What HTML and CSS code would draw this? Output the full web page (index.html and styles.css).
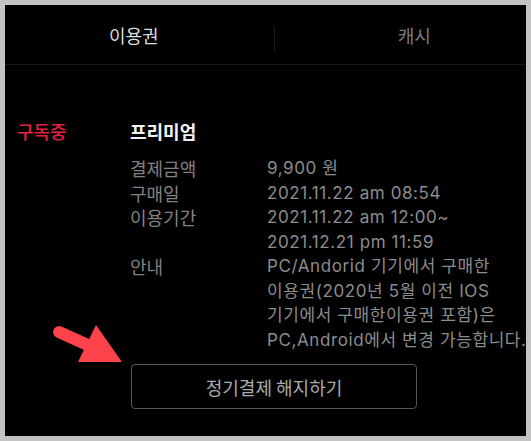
FILE: index.html
```html
<!DOCTYPE html>
<html>

<head>
    <title>이용권</title>
    <link rel="stylesheet" href="styles.css">
</head>

<body>
    <div class="frame">
        <div class="screen">
            <nav class="tabs">
                <div class="tab active">이용권</div>
                <span class="tab-divider"></span>
                <div class="tab">캐시</div>
            </nav>

            <section class="pass">
                <div class="status">구독중</div>
                <div class="info">
                    <h2 class="plan">프리미엄</h2>
                    <dl class="details">
                        <dt>결제금액</dt>
                        <dd>9,900 원</dd>
                        <dt>구매일</dt>
                        <dd>2021.11.22 am 08:54</dd>
                        <dt>이용기간</dt>
                        <dd>2021.11.22 am 12:00~<br>2021.12.21 pm 11:59</dd>
                        <dt>안내</dt>
                        <dd>PC/Andorid 기기에서 구매한<br>이용권(2020년 5월 이전 IOS<br>기기에서 구매한이용권 포함)은<br>PC,Android에서 변경 가능합니다.</dd>
                    </dl>
                </div>
            </section>

            <div class="actions">
                <button class="cancel">정기결제 해지하기</button>
            </div>
        </div>

        <svg class="pointer" width="80" height="50" viewBox="0 0 80 50">
            <line x1="9" y1="14" x2="40" y2="28" stroke="#fb4349" stroke-width="12" stroke-linecap="round" />
            <polygon points="46,7 72,44 28,44" fill="#fb4349" />
        </svg>
    </div>
</body>

</html>
```

FILE: styles.css
```css
body {
    margin: 0;
    padding: 5px;
    background-color: #c3c3c3;
    font-family: "Inter", "Noto Sans CJK KR", sans-serif;
}

.frame {
    position: relative;
    width: 521px;
    height: 431px;
    background-color: #000000;
    overflow: hidden;
}

.screen {
    width: 560px;
    margin-left: -11px;
}

.tabs {
    display: flex;
    height: 59px;
    border-bottom: 1px solid #161616;
}

.tab {
    flex: 1;
    display: flex;
    align-items: center;
    justify-content: center;
    font-family: "Noto Sans CJK KR", sans-serif;
    font-size: 18px;
    color: #7c7c7c;
}

.tab.active {
    color: #dcdcdc;
}

.tab-divider {
    width: 1px;
    height: 25px;
    margin-top: 21px;
    background-color: #1c1c1c;
}

.pass {
    display: flex;
    padding-top: 54px;
}

.status {
    width: 136px;
    padding-left: 23px;
    box-sizing: border-box;
    font-family: "Noto Sans CJK KR", sans-serif;
    font-size: 18px;
    font-weight: 500;
    line-height: 24px;
    color: #e3203d;
}

.plan {
    margin: 0 0 13px;
    font-family: "Noto Sans CJK KR", sans-serif;
    font-size: 18px;
    font-weight: 700;
    line-height: 24px;
    color: #f2f2f2;
}

.details {
    display: grid;
    grid-template-columns: 137px auto;
    margin: 0;
    font-size: 17px;
    line-height: 24.5px;
}

.details dt {
    font-family: "Noto Sans CJK KR", sans-serif;
    font-size: 18px;
    color: #828282;
}

.details dd {
    margin: 0;
    white-space: nowrap;
    letter-spacing: 0.6px;
    color: #8c8c8c;
}

.actions {
    display: flex;
    justify-content: center;
    margin-top: 12px;
}

.cancel {
    width: 286px;
    height: 45px;
    background-color: transparent;
    border: 1.5px solid #555555;
    border-radius: 4px;
    font-family: "Noto Sans CJK KR", sans-serif;
    font-size: 18px;
    color: #ababab;
}

.pointer {
    position: absolute;
    left: 45px;
    top: 313px;
}
```
